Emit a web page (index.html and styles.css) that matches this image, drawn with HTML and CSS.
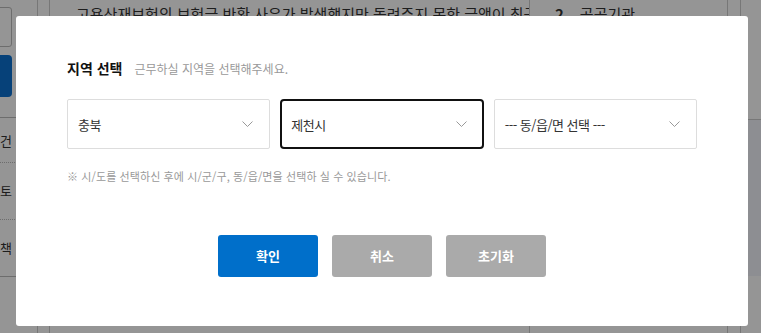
FILE: index.html
```html
<!DOCTYPE html>
<html lang="ko">
<head>
    <meta charset="UTF-8">
    <meta name="viewport" content="width=device-width, initial-scale=1.0">
    <title>지역 선택</title>
    <link rel="stylesheet" href="styles.css">
</head>
<body>
    <!-- 뒤쪽 페이지 -->
    <div class="page">
        <div class="side">
            <div class="side-inner">
                <div class="side-input"></div>
                <div class="side-btn"></div>
                <ul class="side-list">
                    <li>고용조건</li>
                    <li>근로시간 검토</li>
                    <li>근로자 책</li>
                </ul>
            </div>
        </div>
        <div class="col-main">고용산재보험의 보험금 반환 사유가 발생했지만 돌려주지 못한 금액이 최근 4</div>
        <div class="col-rank"><b>2</b><span>공공기관</span></div>
        <div class="col-narrow"></div>
        <div class="col-right">
            <div class="right-band"></div>
        </div>
    </div>

    <!-- 지역 선택 팝업 -->
    <div class="overlay">
        <div class="modal">
            <div class="modal-title">
                <strong>지역 선택</strong>
                <span>근무하실 지역을 선택해주세요.</span>
            </div>
            <div class="select-row">
                <div class="select">
                    <span>충북</span>
                    <svg width="11" height="6" viewBox="0 0 11 6"><polyline points="0.5,0.5 5.5,5.5 10.5,0.5" fill="none" stroke="#999" stroke-width="1"/></svg>
                </div>
                <div class="select active">
                    <span>제천시</span>
                    <svg width="11" height="6" viewBox="0 0 11 6"><polyline points="0.5,0.5 5.5,5.5 10.5,0.5" fill="none" stroke="#999" stroke-width="1"/></svg>
                </div>
                <div class="select">
                    <span>--- 동/읍/면 선택 ---</span>
                    <svg width="11" height="6" viewBox="0 0 11 6"><polyline points="0.5,0.5 5.5,5.5 10.5,0.5" fill="none" stroke="#999" stroke-width="1"/></svg>
                </div>
            </div>
            <p class="note">※ 시/도를 선택하신 후에 시/군/구, 동/읍/면을 선택하 실 수 있습니다.</p>
            <div class="btn-row">
                <a href="#" class="btn btn-ok">확인</a>
                <a href="#" class="btn btn-gray">취소</a>
                <a href="#" class="btn btn-gray">초기화</a>
            </div>
        </div>
    </div>
</body>
</html>
```

FILE: styles.css
```css
body {
    margin: 0;
    font-family: "Noto Sans CJK KR", "Noto Sans", sans-serif;
    color: #333;
    background: #fff;
    height: 100vh;
    overflow: hidden;
}

/* 뒤쪽 페이지 */
.page {
    display: flex;
    height: 100vh;
}
.side {
    width: 37px;
    border-right: 1px solid #ccc;
    overflow: hidden;
    flex-shrink: 0;
}
.side-inner {
    width: 200px;
    margin-left: -172px;
    padding-top: 7px;
}
.side-input {
    height: 38px;
    border: 1px solid #bbb;
    border-radius: 3px;
    width: 182px;
}
.side-btn {
    height: 42px;
    width: 184px;
    margin-top: 8px;
    background: #0b6fd0;
    border-radius: 4px;
}
.side-list {
    list-style: none;
    margin: 20px 0 0;
    padding: 0;
    border-top: 1px solid #bbb;
    border-bottom: 1px solid #bbb;
    width: 189px;
    font-size: 13px;
}
.side-list li {
    height: 56px;
    line-height: 56px;
    text-align: right;
    padding-right: 5px;
    border-bottom: 1px dotted #bbb;
}
.side-list li:first-child {
    height: 44px;
    line-height: 46px;
}
.side-list li:last-child {
    border-bottom: none;
}
.col-main {
    width: 453px;
    margin-left: 11px;
    border-left: 1px solid #ccc;
    padding: 3px 0 0 26px;
    font-size: 15px;
    white-space: nowrap;
    overflow: hidden;
}
.col-rank {
    width: 198px;
    border-left: 1px solid #ccc;
    padding: 3px 0 0 25px;
    font-size: 15px;
    box-sizing: border-box;
}
.col-rank b {
    margin-right: 16px;
}
.col-narrow {
    width: 12px;
    border-left: 1px solid #ccc;
    border-right: 1px solid #ccc;
}
.col-right {
    flex: 1;
    padding-top: 107px;
}
.right-band {
    border-top: 1px solid #ccc;
    margin-top: 12px;
    height: 156px;
    background: #f1f3fa;
}

/* 팝업 */
.overlay {
    position: fixed;
    top: 0;
    left: 0;
    right: 0;
    bottom: 0;
    background: rgba(0, 0, 0, 0.415);
    padding: 16px 13px 7px 16px;
    display: flex;
}
.modal {
    flex: 1;
    background: #fff;
    border-radius: 3px;
    padding: 42px 51px 0;
}
.modal-title {
    display: flex;
    align-items: baseline;
    gap: 12px;
    line-height: 20px;
}
.modal-title strong {
    font-size: 14px;
    font-weight: bold;
    color: #111;
}
.modal-title span {
    font-size: 12px;
    color: #999;
}
.select-row {
    display: grid;
    grid-template-columns: 1fr 1fr 1fr;
    gap: 10px;
    margin-top: 20px;
}
.select {
    height: 50px;
    box-sizing: border-box;
    border: 1px solid #ddd;
    border-radius: 2px;
    padding: 0 16px 0 10px;
    display: flex;
    align-items: center;
    justify-content: space-between;
    font-size: 13px;
    letter-spacing: -0.5px;
    color: #333;
}
.select.active {
    border: 2px solid #111;
    border-radius: 4px;
    padding: 0 15px 0 9px;
}
.note {
    margin: 19px 0 0;
    font-size: 11px;
    line-height: 16px;
    color: #999;
    letter-spacing: 0.1px;
}
.btn-row {
    display: flex;
    justify-content: center;
    gap: 14px;
    margin-top: 51px;
}
.btn {
    width: 100px;
    height: 42px;
    line-height: 42px;
    text-align: center;
    border-radius: 3px;
    color: #fff;
    font-size: 13px;
    font-weight: bold;
    text-decoration: none;
}
.btn-ok {
    background: #006fca;
}
.btn-gray {
    background: #aaa;
}
```
